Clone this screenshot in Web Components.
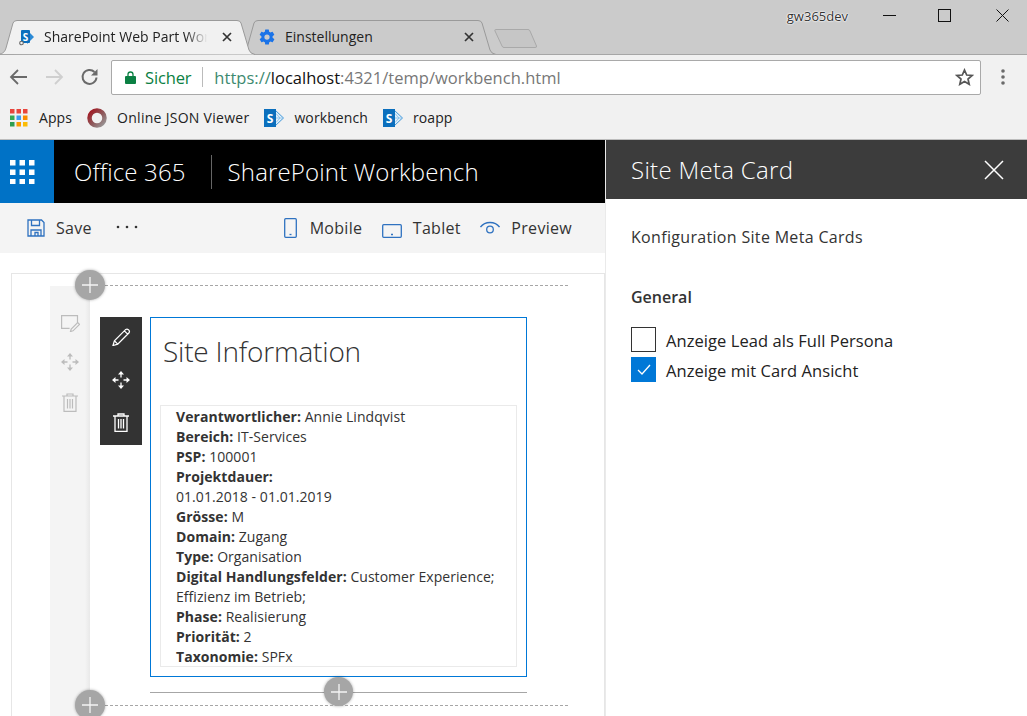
<!DOCTYPE html>
<html lang="de"><head><meta charset="utf-8"><title>SharePoint Workbench</title>
<style>
html,body{margin:0;padding:0;height:716px;overflow:hidden;background:#fff}
body{font-family:"Open Sans","Noto Sans",sans-serif;display:flex;flex-direction:column;color:#333}
</style></head><body>
<browser-chrome></browser-chrome>
<workbench-app></workbench-app>
<script>
const def=(name,css,html)=>customElements.define(name,class extends HTMLElement{connectedCallback(){if(this.shadowRoot)return;const r=this.attachShadow({mode:'open'});const a=n=>this.getAttribute(n)||'';r.innerHTML='<style>'+css+'</style>'+(typeof html==='function'?html(a,this):html)}});
const spBig=`<svg style="display:block" width="20" height="20" viewBox="0 0 20 20"><path d="M11 2l8.500 8-8.500 8z" fill="#e3f0fa" stroke="#3f97d8"/><path d="M12 10h7M12 5.500l4 4.500-4 4.500" fill="none" stroke="#7dbbe8" stroke-width=".8"/><rect x="0" y="1" width="12" height="18" fill="#0b6fbd"/><text x="6" y="14.500" font-size="12" font-weight="700" text-anchor="middle" fill="#fff" font-family="Open Sans">S</text></svg>`;
const spTab=`<svg style="display:block" width="18" height="18" viewBox="0 0 18 18"><path d="M8 2l7 7-7 7z" fill="#2b8ad6"/><rect x="2" y="2" width="9" height="13" rx="1" fill="#0b6fbd"/><text x="6.500" y="12.500" font-size="10" font-weight="700" text-anchor="middle" fill="#fff" font-family="Open Sans">S</text><circle cx="2.500" cy="15" r="1.800" fill="#f1f1f1" stroke="#666" stroke-width="1.100"/></svg>`;
const moveIcon=c=>`<svg style="display:block" width="18" height="18" viewBox="0 0 18 18" fill="${c}" stroke="none"><path d="M9 0l3 3.500H6zM9 18l-3-3.500h6zM0 9l3.500-3v6zM18 9l-3.500 3V6z"/><path d="M9 3v3.500M9 11.500V15M3 9h3.500M11.500 9H15" stroke="${c}" stroke-width="1.300"/></svg>`;
const trashIcon=(c,w)=>`<svg style="display:block" width="16" height="19" viewBox="0 0 16 19" fill="none" stroke="${c}" stroke-width="${w}"><path d="M0 3h16M5 3V1h6v2M2 3v15.300h12V3M5.500 6v9.500M8 6v9.500M10.500 6v9.500"/></svg>`;

def('chrome-tab',`
:host{display:block;position:relative;width:255px;height:35px;margin-right:-14px;font-size:14px;color:#222;flex:none}
:host([active]){z-index:2}
svg.bg{position:absolute;inset:0}
.c{position:relative;display:flex;align-items:center;height:33px;padding:0 var(--pr,23px) 0 var(--pl,18px);box-sizing:border-box}
.i{width:18px;height:18px;display:flex;flex:none}
.t{margin-left:var(--tm,7px);flex:1;white-space:nowrap;overflow:hidden}
:host([active]) .t{-webkit-mask-image:linear-gradient(90deg,#000 86%,transparent 99%)}
.x{flex:none;width:10px;height:10px;margin-left:13px}`,
(a,el)=>{const act=el.hasAttribute('active');return `<svg class="bg" width="255" height="35" viewBox="0 0 255 35"><path d="M0 34C4 33 5 31 6 28L13 3Q14 .5 17 .5H237Q240 .5 241 3L249 30Q250 33.500 255 34.500" fill="${act?'#f1f1f1':'#cbcbcb'}" stroke="#9a9a9a"/>${act?'':'<path d="M0 34.500H255" stroke="#a6a6a6"/>'}</svg>
<div class="c"><span class="i"><slot name="icon"></slot></span><span class="t">${a('label')}</span><svg class="x" viewBox="0 0 10 10"><path d="M1 1l8 8M9 1l-8 8" stroke="#333" stroke-width="1.700"/></svg></div>`});

def('tab-strip',`
:host{display:flex;height:55px;box-sizing:border-box;background:#cbcbcb;border-bottom:1px solid #a6a6a6;align-items:flex-end;position:relative;color:#222}
.tabs{display:flex;align-items:flex-end;margin-bottom:-1px}
.new{margin:0 0 5px 12px;flex:none}
.sp{flex:1}
.win{align-self:flex-start;display:flex;align-items:center;height:31px}
.user{font-size:13px;color:#333;margin-right:35px;text-shadow:0 0 2px #fff,0 0 2px #fff,0 0 1px #fff}
.b{width:13px;height:13px;display:block}`,
`<div class="tabs"><slot></slot></div>
<svg class="new" width="44" height="21" viewBox="0 0 44 21"><path d="M1.500 1.500H34q1.500 0 2 1.500L42.500 18q.5 1.500-1.500 1.500H10q-1.500 0-2-1.500L1 3q-.5-1.500.5-1.500z" fill="#c6c6c6" stroke="#a9a9a9"/></svg>
<div class="sp"></div>
<div class="win"><span class="user">gw365dev</span>
<svg class="b" style="margin-right:42px" viewBox="0 0 13 13"><path d="M0 6.500H13" stroke="#111"/></svg>
<svg class="b" style="margin-right:45px" viewBox="0 0 13 13"><rect x=".5" y=".5" width="12" height="12" fill="none" stroke="#111"/></svg>
<svg class="b" style="margin-right:18px" viewBox="0 0 13 13"><path d="M.5.500l12 12M12.500.500l-12 12" stroke="#111"/></svg></div>`);

def('nav-bar',`
:host{display:flex;align-items:center;height:44px;background:#f1f1f1;box-sizing:border-box;padding:0 0 0 9px}
svg{flex:none;display:block}
.o{flex:1;margin:0 20px 0 12px;box-sizing:border-box;background:#fff;border:1px solid #a9a9a9;border-radius:2px;display:flex;align-items:center;font-size:16.500px;padding:0 6.500px 0 13px;white-space:nowrap;height:35px}
.s{color:#0b8043;margin-left:9px;letter-spacing:-.15px}
.d{width:1px;height:20px;background:#bbb;margin:0 11px 0 11px}
.url{letter-spacing:.02px}
.g{color:#3d8a70}.k{color:#111}.r{color:#777}
.u{flex:1}`,
`<svg style="margin-right:17px" width="19" height="18" viewBox="0 0 19 18"><path d="M18 9H2M9 2L2 9l7 7" fill="none" stroke="#6a6a6a" stroke-width="1.800"/></svg>
<svg style="margin-right:16px" width="19" height="18" viewBox="0 0 19 18"><path d="M1 9h16M10 2l7 7-7 7" fill="none" stroke="#cfcfcf" stroke-width="1.800"/></svg>
<svg width="19" height="18" viewBox="0 0 19 18"><path d="M16.500 9.500A7 7 0 1 1 14.500 4" fill="none" stroke="#6a6a6a" stroke-width="2"/><path d="M17.500 1v6.500H11z" fill="#6a6a6a"/></svg>
<div class="o"><svg width="11" height="13" viewBox="0 0 11 13"><path d="M3 6V3.500a2.500 2.500 0 0 1 5 0V6" fill="none" stroke="#0b8043" stroke-width="1.300"/><rect y="5" width="11" height="8" rx="1" fill="#0b8043"/></svg><span class="s">Sicher</span><span class="d"></span><span class="url"><span class="g">https://</span><span class="k">localhost</span><span class="r">:4321/temp/workbench.html</span></span><span class="u"></span>
<svg width="19" height="18" viewBox="0 0 19 18"><path d="M9.500 2l2.200 5 5.300.5-4 3.500 1.200 5.300-4.700-2.800-4.700 2.800 1.200-5.300-4-3.500 5.300-.5z" fill="none" stroke="#555" stroke-width="1.700"/></svg></div>
<svg style="margin-right:22px" width="4" height="16" viewBox="0 0 4 16"><circle cx="2" cy="2" r="1.800" fill="#6a6a6a"/><circle cx="2" cy="8" r="1.800" fill="#6a6a6a"/><circle cx="2" cy="14" r="1.800" fill="#6a6a6a"/></svg>`);

def('book-mark',`
:host{display:flex;align-items:center;font-size:14px;letter-spacing:var(--ls,.1px);color:#222;white-space:nowrap;margin-right:15px}
span.i{display:flex;width:20px;height:20px;margin-right:10px;align-items:center;justify-content:center}`,
`<span class="i"><slot name="icon"></slot></span><span><slot></slot></span>`);

def('bookmarks-bar',`:host{display:flex;align-items:center;height:41px;box-sizing:border-box;background:#f1f1f1;border-bottom:1px solid #bdbdbd;padding:0 0 3px 9px}`,`<slot></slot>`);

def('browser-chrome',`:host{display:block;flex:none}`,()=>{
 const c=['#e8453c','#e8453c','#e8453c','#34a853','#3b9bf0','#fb8c00','#2e9e50','#fb9c00','#fbbc05'];
 const rects=c.map((f,i)=>`<rect x="${1+(i%3)*6.500}" y="${1+Math.floor(i/3)*6.500}" width="4.500" height="4.500" fill="${f}"/>`).join('');
 return `<tab-strip>
 <chrome-tab active label="SharePoint Web Part Wor" style="--pl:19px"><span slot="icon">${spTab}</span></chrome-tab>
 <chrome-tab label="Einstellungen" style="--pl:17px;--tm:9px;--pr:22px"><svg slot="icon" style="display:block" width="18" height="18" viewBox="0 0 24 24"><path fill="#1a73e8" d="M19.400 13c.04-.3.1-.66.1-1s-.06-.7-.1-1l2.100-1.600c.2-.15.25-.42.12-.64l-2-3.460c-.12-.22-.4-.3-.6-.22l-2.500 1c-.52-.4-1.080-.73-1.700-.98l-.37-2.650A.5.5 0 0 0 14 2h-4a.5.5 0 0 0-.5.420l-.37 2.650c-.62.25-1.180.58-1.700.98l-2.500-1c-.22-.08-.48 0-.6.220l-2 3.460c-.13.22-.07.49.12.640L4.600 11c-.04.3-.1.66-.1 1s.06.7.1 1l-2.100 1.600c-.2.150-.25.420-.12.640l2 3.460c.12.220.4.3.6.220l2.500-1c.52.4 1.080.73 1.700.98l.37 2.650c.03.240.24.420.5.420h4c.26 0 .47-.18.5-.42l.37-2.650c.62-.25 1.180-.58 1.700-.98l2.500 1c.22.08.48 0 .6-.22l2-3.460c.13-.22.07-.49-.12-.64zM12 15.500a3.500 3.500 0 1 1 0-7 3.500 3.500 0 0 1 0 7z"/></svg></chrome-tab></tab-strip>
 <nav-bar></nav-bar>
 <bookmarks-bar>
 <book-mark><svg slot="icon" style="display:block" width="20" height="20" viewBox="0 0 20 20">${rects}</svg>Apps</book-mark>
 <book-mark style="--ls:.28px"><svg slot="icon" style="display:block" width="20" height="20" viewBox="0 0 20 20"><defs><linearGradient id="g" x1="0" y1="0" x2="1" y2="1"><stop offset="0" stop-color="#a3151f"/><stop offset=".55" stop-color="#8e5a5c"/><stop offset="1" stop-color="#9a9a9a"/></linearGradient></defs><circle cx="10" cy="10" r="7.500" fill="none" stroke="url(#g)" stroke-width="4.500"/></svg>Online JSON Viewer</book-mark>
 <book-mark><span slot="icon">${spBig}</span>workbench</book-mark>
 <book-mark><span slot="icon">${spBig}</span>roapp</book-mark>
 </bookmarks-bar>`});

def('suite-bar',`
:host{display:flex;align-items:center;height:63px;background:#000;color:#fff;font-size:24px;font-weight:300;letter-spacing:.15px;white-space:nowrap}
.w{width:54px;height:63px;background:#0072c6;display:flex;align-items:center;padding-left:10px;box-sizing:border-box;flex:none}
.a{margin-left:20px}.d{width:1px;height:34px;background:#666;margin:0 16px 0 25px}`,
`<div class="w"><svg width="25" height="24" viewBox="0 0 25 24" fill="#fff">${[0,9.500,19].flatMap(y=>[0,9.500,19].map(x=>`<rect x="${x}" y="${y}" width="5.500" height="5.500"/>`)).join('')}</svg></div><span class="a">Office 365</span><span class="d"></span><span>SharePoint Workbench</span>`);

def('cmd-btn',`
:host{display:flex;align-items:center;font-size:16px;letter-spacing:.3px;color:#333;white-space:nowrap}
span{display:flex;margin-right:var(--g,11px)}`,`<span><slot name="icon"></slot></span><slot></slot>`);

def('command-bar',`
:host{display:flex;align-items:center;height:50px;background:#f4f4f4;padding:0 33px 0 27px;flex:none}
.m{margin:-2px 0 0 24px;display:block}
.sp{flex:1}
cmd-btn+cmd-btn{margin-left:19.500px}`,
`<cmd-btn><svg slot="icon" width="18" height="18" viewBox="0 0 18 18" fill="none" stroke="#2f72c0" stroke-width="1.300"><path d="M1 1h13.500L17 3.500V17H1zM4.500 1v5.500h8V1M4 17v-6h10v6M8 17v-3.500h3V17"/></svg>Save</cmd-btn>
<svg class="m" width="22" height="4" viewBox="0 0 22 4" fill="#333"><circle cx="2" cy="2" r="1.300"/><circle cx="11" cy="2" r="1.300"/><circle cx="20" cy="2" r="1.300"/></svg><span class="sp"></span>
<cmd-btn style="--g:13px"><svg slot="icon" width="13" height="20" viewBox="0 0 13 20" fill="none" stroke="#2f72c0" stroke-width="1.300"><rect x=".7" y=".7" width="11.600" height="18.600" rx="1"/><path d="M5.500 16.500h2"/></svg>Mobile</cmd-btn>
<cmd-btn><svg slot="icon" style="margin-top:6px" width="20" height="14" viewBox="0 0 20 14" fill="none" stroke="#2f72c0" stroke-width="1.300"><rect x=".7" y=".7" width="18.600" height="12.600" rx="1"/><path d="M9 10.500h2"/></svg>Tablet</cmd-btn>
<cmd-btn><svg slot="icon" style="margin-top:-1px" width="20" height="13" viewBox="0 0 20 13" fill="none" stroke="#2f72c0" stroke-width="1.300"><path d="M.5 6C5 .0 15 .0 19.500 6"/><circle cx="10" cy="8.500" r="3.300"/></svg>Preview</cmd-btn>`);

def('add-btn',`
:host{position:absolute;display:block;width:30px;height:30px;border-radius:50%;background:#a6a6a6;box-shadow:0 0 3px rgba(0,0,0,.35)}
svg{display:block;margin:7px}`,`<svg width="16" height="16" viewBox="0 0 16 16"><path d="M8 0v16M0 8h16" stroke="#f4f4f4" stroke-width="1.300"/></svg>`);

def('zone-rail',`
:host{display:flex;flex-direction:column;align-items:center;width:40px;background:linear-gradient(90deg,#f4f4f4 calc(100% - 5px),#e9e9e9);padding-top:29px;box-sizing:border-box;flex:none;margin-left:38px}
svg{display:block;flex:none}`,
`<svg style="margin-left:1px" width="19" height="17" viewBox="0 0 19 17" fill="none" stroke="#bcbcbc" stroke-width="1.200"><path d="M16.500 8V.6H.6v12.800h8"/><path d="M9.500 16.500l.7-2.500 6.500-6.500 1.800 1.800-6.500 6.500z"/></svg>
<span style="margin-top:21px;display:block">${moveIcon('#bcbcbc')}</span>
<span style="margin-top:22px;display:block">${trashIcon('#bcbcbc',1.200)}</span>`);

def('part-toolbar',`
:host{display:flex;flex-direction:column;align-items:center;width:42px;height:128px;background:#333;flex:none;padding-top:11px;box-sizing:border-box;margin:31px 8px 0 10px}
svg{display:block}`,
`<svg width="19" height="18" viewBox="0 0 20 19" fill="none" stroke="#fff" stroke-width="1.300"><path d="M1 18.500l1.500-5L14.500 1.500q1.500-1 3 .5t.5 3L6 17zM2.500 13.500L6 17M13 3l3.500 3.500"/></svg>
<span style="margin-top:25px;display:block">${moveIcon('#fff')}</span>
<span style="margin-top:24px;display:block">${trashIcon('#fff',1.300)}</span>`);

def('meta-row',`
:host{display:block;font-size:14px;line-height:20px;letter-spacing:.05px;color:#333}
b{font-weight:700;color:#333}`,(a)=>(a('k')?`<b>${a('k')}:</b> `:'')+`<slot></slot>`);

def('site-card',`
:host{display:block;position:relative;width:377px;height:360px;box-sizing:border-box;border:1px solid #0078d7;margin-top:31px;padding:9px;flex:none}
h2{margin:0 0 0 3px;font-size:28px;line-height:48px;height:78px;font-weight:300;letter-spacing:-.2px;color:#333}
.b{height:262px;box-sizing:border-box;border:1px solid #eaeaea;padding:1px 15px 0 15px;overflow:hidden;width:357px}`,
`<h2>Site Information</h2><div class="b"><slot></slot></div>`);

def('check-row',`
:host{display:flex;align-items:center;height:25px;font-size:16.500px;letter-spacing:.06px;color:#222;white-space:nowrap}
.c{width:25px;height:25px;box-sizing:border-box;border:1px solid #333;margin-right:10px;flex:none;display:flex;align-items:center;justify-content:center}
.t{padding-top:2px}
:host([checked]) .c{background:#0078d7;border-color:#0078d7}`,
(a,el)=>`<span class="c">${el.hasAttribute('checked')?'<svg width="14" height="11" viewBox="0 0 14 11"><path d="M1 6l4 4 8-9" fill="none" stroke="#fff" stroke-width="1.300"/></svg>':''}</span><span class="t"><slot></slot></span>`);

def('prop-pane',`
:host{display:block;width:422px;flex:none;box-sizing:border-box;border-left:1px solid #eaeaea;background:#fff;height:100%}
header{height:59px;background:#3c3c3c;color:#fff;display:flex;align-items:center;justify-content:space-between;padding:0 23px 0 25px;font-size:24px;font-weight:300;letter-spacing:.3px;white-space:nowrap}
.in{padding:24px 25px 0 25px}
p{margin:0;font-size:16px;line-height:28px;letter-spacing:.32px;color:#333}
h3{margin:32px 0 16px;font-size:16px;line-height:28px;font-weight:600;letter-spacing:0;color:#333}
.l{display:flex;flex-direction:column;gap:5px}`,
`<header><span>Site Meta Card</span><svg width="20" height="20" viewBox="0 0 20 20"><path d="M1 1l18 18M19 1L1 19" stroke="#fff" stroke-width="1.500"/></svg></header>
<div class="in"><p>Konfiguration Site Meta Cards</p><h3>General</h3><div class="l"><check-row>Anzeige Lead als Full Persona</check-row><check-row checked>Anzeige mit Card Ansicht</check-row></div></div>`);

def('workbench-app',`
:host{display:flex;height:576px;overflow:hidden;flex:none}
.main{width:605px;flex:none;display:flex;flex-direction:column;min-width:0}
.canvas{position:relative;flex:1;margin:20px 0 0 11px;border:1px solid #e6e6e6;border-bottom:0;display:flex;min-height:0}
.zone{display:flex;margin-top:12px;flex:1;min-height:0}
.dash{position:absolute;left:93px;width:463px;border-top:1px dashed #a6a6a6}
.hr{position:absolute;left:138px;width:377px;border-top:1px solid #a6a6a6;top:418px}`,
`<div class="main"><suite-bar></suite-bar><command-bar></command-bar>
<div class="canvas"><div class="zone"><zone-rail></zone-rail><part-toolbar></part-toolbar>
<site-card>
<meta-row k="Verantwortlicher">Annie Lindqvist</meta-row>
<meta-row k="Bereich">IT-Services</meta-row>
<meta-row k="PSP">100001</meta-row>
<meta-row k="Projektdauer"></meta-row>
<meta-row>01.01.2018 - 01.01.2019</meta-row>
<meta-row k="Grösse">M</meta-row>
<meta-row k="Domain">Zugang</meta-row>
<meta-row k="Type">Organisation</meta-row>
<meta-row k="Digital Handlungsfelder">Customer Experience;</meta-row>
<meta-row>Effizienz im Betrieb;</meta-row>
<meta-row k="Phase">Realisierung</meta-row>
<meta-row k="Priorität">2</meta-row>
<meta-row k="Taxonomie">SPFx</meta-row>
</site-card></div>
<span class="dash" style="top:11px"></span><add-btn style="left:63px;top:-4px"></add-btn>
<span class="hr"></span><add-btn style="left:312px;top:403px;width:29px;height:29px"></add-btn>
<span class="dash" style="top:431px"></span><add-btn style="left:63px;top:416px"></add-btn>
</div></div><prop-pane></prop-pane>`);
</script>
</body></html>
